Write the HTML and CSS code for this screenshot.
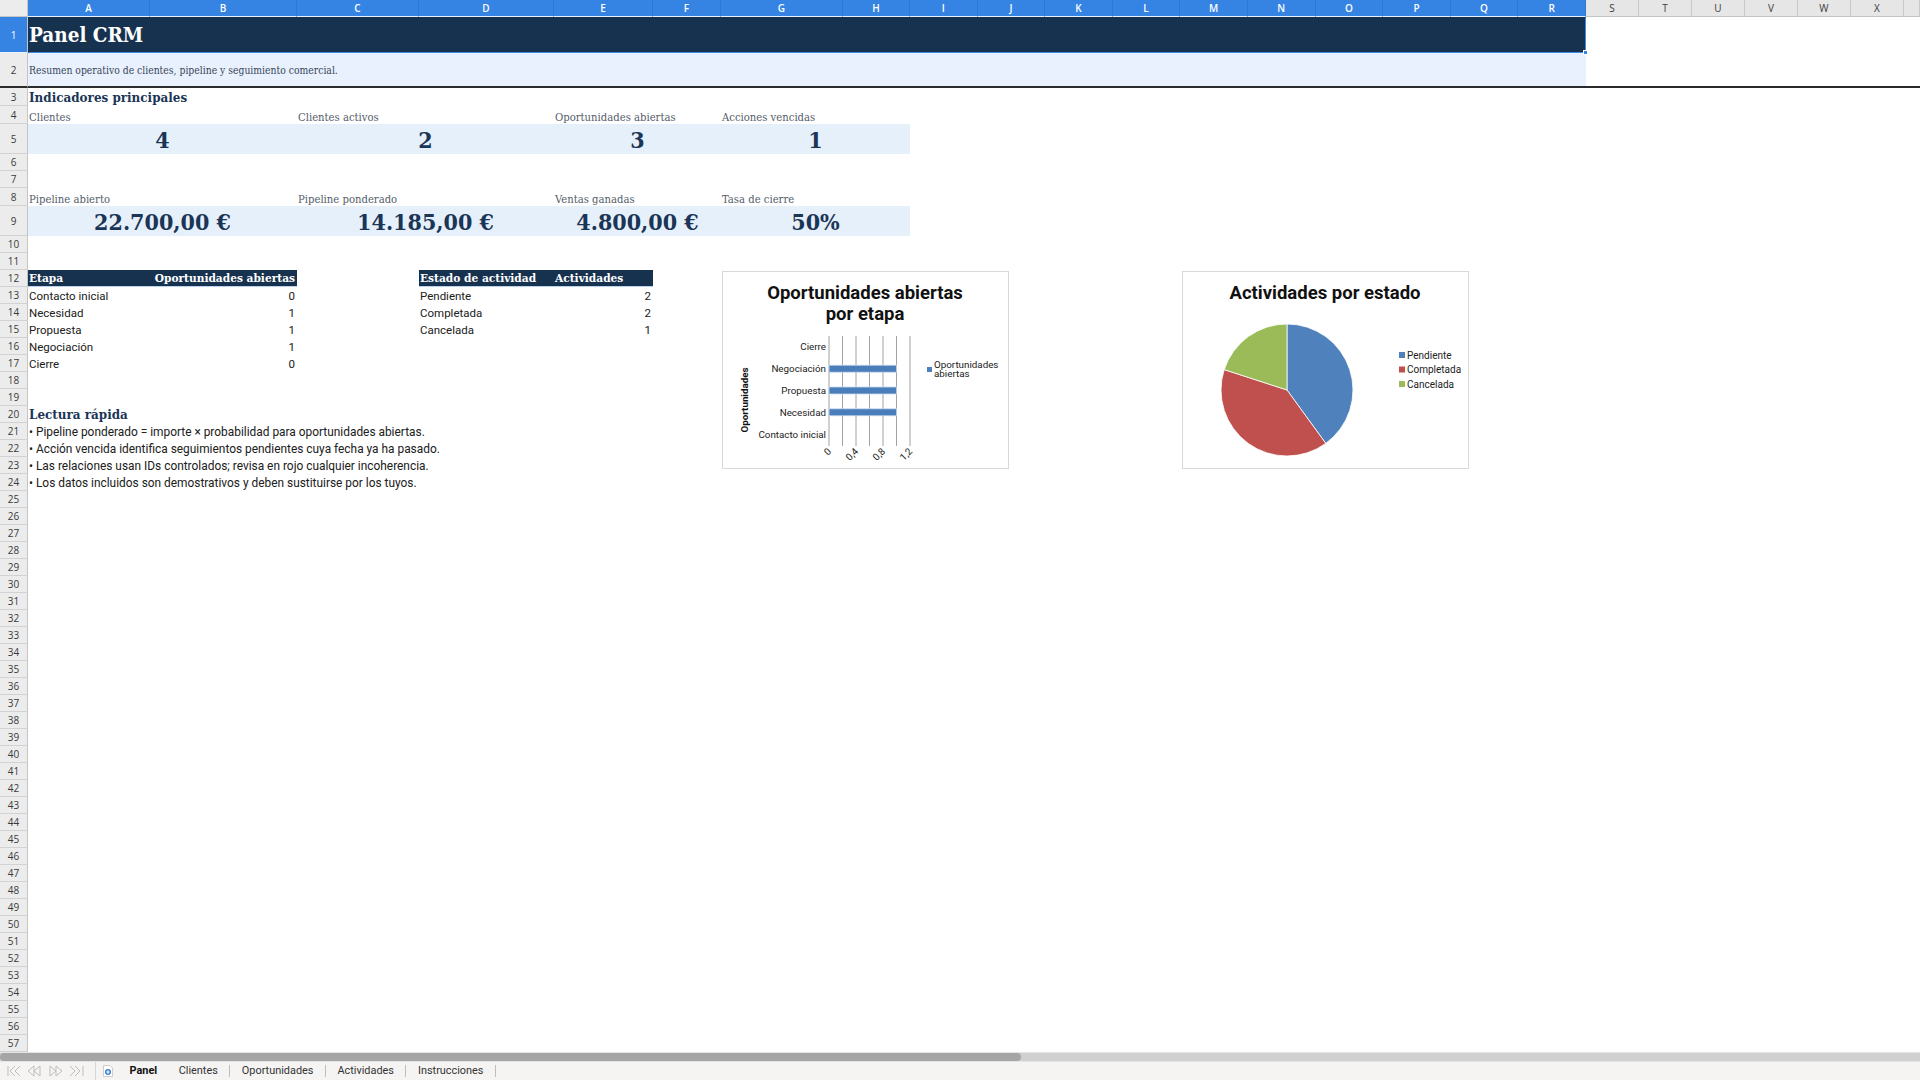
FILE: index.html
```html
<!DOCTYPE html>
<html lang="es">
<head>
<meta charset="utf-8">
<title>Panel CRM</title>
<link rel="stylesheet" href="styles.css">
</head>
<body>
<div class="app">
  <div class="colhdr">
    <div class="corner"></div>
    <div class="ch sel">A</div><div class="ch sel">B</div><div class="ch sel">C</div><div class="ch sel">D</div>
    <div class="ch sel">E</div><div class="ch sel">F</div><div class="ch sel">G</div><div class="ch sel">H</div>
    <div class="ch sel">I</div><div class="ch sel">J</div><div class="ch sel">K</div><div class="ch sel">L</div>
    <div class="ch sel">M</div><div class="ch sel">N</div><div class="ch sel">O</div><div class="ch sel">P</div>
    <div class="ch sel">Q</div><div class="ch sel">R</div>
    <div class="ch">S</div><div class="ch">T</div><div class="ch">U</div><div class="ch">V</div><div class="ch">W</div><div class="ch">X</div><div class="ch"></div>
  </div>

  <div class="sheet">
    <div class="rowhdr rows">
      <div class="rh sel">1</div><div class="rh frz">2</div><div class="rh">3</div><div class="rh">4</div><div class="rh">5</div>
      <div class="rh">6</div><div class="rh">7</div><div class="rh">8</div><div class="rh">9</div><div class="rh">10</div>
      <div class="rh">11</div><div class="rh">12</div><div class="rh">13</div><div class="rh">14</div><div class="rh">15</div>
      <div class="rh">16</div><div class="rh">17</div><div class="rh">18</div><div class="rh">19</div><div class="rh">20</div>
      <div class="rh">21</div><div class="rh">22</div><div class="rh">23</div><div class="rh">24</div><div class="rh">25</div>
      <div class="rh">26</div><div class="rh">27</div><div class="rh">28</div><div class="rh">29</div><div class="rh">30</div>
      <div class="rh">31</div><div class="rh">32</div><div class="rh">33</div><div class="rh">34</div><div class="rh">35</div>
      <div class="rh">36</div><div class="rh">37</div><div class="rh">38</div><div class="rh">39</div><div class="rh">40</div>
      <div class="rh">41</div><div class="rh">42</div><div class="rh">43</div><div class="rh">44</div><div class="rh">45</div>
      <div class="rh">46</div><div class="rh">47</div><div class="rh">48</div><div class="rh">49</div><div class="rh">50</div>
      <div class="rh">51</div><div class="rh">52</div><div class="rh">53</div><div class="rh">54</div><div class="rh">55</div>
      <div class="rh">56</div><div class="rh">57</div>
    </div>

    <div class="cells rows">
      <div class="cell title r1 sAR">Panel CRM<span class="handle"></span></div>
      <div class="cell subtitle r2 sAR">Resumen operativo de clientes, pipeline y seguimiento comercial.</div>
      <div class="freeze r2"></div>

      <div class="cell h3 r3 ca">Indicadores principales</div>

      <div class="cell lbl r4 ca">Clientes</div>
      <div class="cell lbl r4 cc">Clientes activos</div>
      <div class="cell lbl r4 ce">Oportunidades abiertas</div>
      <div class="cell lbl r4 cg">Acciones vencidas</div>

      <div class="cell kpi r5 ca s2">4</div>
      <div class="cell kpi r5 cc s2">2</div>
      <div class="cell kpi r5 ce s2">3</div>
      <div class="cell kpi r5 cg s2">1</div>

      <div class="cell lbl r8 ca">Pipeline abierto</div>
      <div class="cell lbl r8 cc">Pipeline ponderado</div>
      <div class="cell lbl r8 ce">Ventas ganadas</div>
      <div class="cell lbl r8 cg">Tasa de cierre</div>

      <div class="cell kpi r9 ca s2">22.700,00 €</div>
      <div class="cell kpi r9 cc s2">14.185,00 €</div>
      <div class="cell kpi r9 ce s2">4.800,00 €</div>
      <div class="cell kpi r9 cg s2">50%</div>

      <div class="cell th r12 ca">Etapa</div>
      <div class="cell th num r12 cb">Oportunidades abiertas</div>
      <div class="cell td r13 ca">Contacto inicial</div><div class="cell td num r13 cb">0</div>
      <div class="cell td r14 ca">Necesidad</div><div class="cell td num r14 cb">1</div>
      <div class="cell td r15 ca">Propuesta</div><div class="cell td num r15 cb">1</div>
      <div class="cell td r16 ca">Negociación</div><div class="cell td num r16 cb">1</div>
      <div class="cell td r17 ca">Cierre</div><div class="cell td num r17 cb">0</div>

      <div class="cell th r12 cd">Estado de actividad</div>
      <div class="cell th r12 ce">Actividades</div>
      <div class="cell td r13 cd">Pendiente</div><div class="cell td num r13 ce">2</div>
      <div class="cell td r14 cd">Completada</div><div class="cell td num r14 ce">2</div>
      <div class="cell td r15 cd">Cancelada</div><div class="cell td num r15 ce">1</div>

      <div class="cell h3 r20 ca">Lectura rápida</div>
      <div class="cell td bl r21 ca">• Pipeline ponderado = importe × probabilidad para oportunidades abiertas.</div>
      <div class="cell td bl r22 ca">• Acción vencida identifica seguimientos pendientes cuya fecha ya ha pasado.</div>
      <div class="cell td bl r23 ca">• Las relaciones usan IDs controlados; revisa en rojo cualquier incoherencia.</div>
      <div class="cell td bl r24 ca">• Los datos incluidos son demostrativos y deben sustituirse por los tuyos.</div>

      <div class="chart chart-bar">
        <svg width="285" height="196" viewBox="0 0 285 196">
          <text class="ct" x="142" y="27">Oportunidades abiertas</text>
          <text class="ct" x="142" y="48">por etapa</text>
          <g class="grid">
            <line x1="106" y1="64" x2="106" y2="174"/>
            <line x1="119.5" y1="64" x2="119.5" y2="174"/>
            <line x1="133" y1="64" x2="133" y2="174"/>
            <line x1="146.5" y1="64" x2="146.5" y2="174"/>
            <line x1="160" y1="64" x2="160" y2="174"/>
            <line x1="173.5" y1="64" x2="173.5" y2="174"/>
            <line x1="187" y1="64" x2="187" y2="174"/>
          </g>
          <g class="bar">
            <rect x="106" y="93.2" width="67.5" height="7"/>
            <rect x="106" y="115" width="67.5" height="7"/>
            <rect x="106" y="136.8" width="67.5" height="7"/>
          </g>
          <g class="cat">
            <text x="103" y="78.4">Cierre</text>
            <text x="103" y="100.2">Negociación</text>
            <text x="103" y="122">Propuesta</text>
            <text x="103" y="143.8">Necesidad</text>
            <text x="103" y="165.6">Contacto inicial</text>
          </g>
          <g class="xl">
            <text transform="translate(109 180) rotate(-45)">0</text>
            <text transform="translate(136 180) rotate(-45)">0,4</text>
            <text transform="translate(163 180) rotate(-45)">0,8</text>
            <text transform="translate(190 180) rotate(-45)">1,2</text>
          </g>
          <text class="yt" transform="translate(25 128) rotate(-90)">Oportunidades</text>
          <rect class="lg-blue" x="204" y="95" width="5" height="5"/>
          <text class="lg" x="211" y="96">Oportunidades</text>
          <text class="lg" x="211" y="105">abiertas</text>
        </svg>
      </div>

      <div class="chart chart-pie">
        <svg width="285" height="196" viewBox="0 0 285 196">
          <text class="ct" x="142" y="27">Actividades por estado</text>
          <path class="s-blue" d="M104 118 L104 52 A66 66 0 0 1 142.79 171.39 Z"/>
          <path class="s-red" d="M104 118 L142.79 171.39 A66 66 0 0 1 41.23 97.61 Z"/>
          <path class="s-green" d="M104 118 L41.23 97.61 A66 66 0 0 1 104 52 Z"/>
          <rect class="lg-blue" x="216" y="80" width="6" height="6"/>
          <text class="lg2" x="224" y="86.5">Pendiente</text>
          <rect class="lg-red" x="216" y="94.5" width="6" height="6"/>
          <text class="lg2" x="224" y="101">Completada</text>
          <rect class="lg-green" x="216" y="109" width="6" height="6"/>
          <text class="lg2" x="224" y="115.5">Cancelada</text>
        </svg>
      </div>
    </div>
  </div>

  <div class="hscroll"><div class="thumb"></div></div>

  <div class="tabbar">
    <div class="nav">
      <svg width="80" height="14" viewBox="0 0 80 14">
        <g class="navic">
          <path d="M2 2 V12"/><path d="M9 2 L4 7 L9 12"/><path d="M14 2 L9 7 L14 12"/>
          <path d="M28 2 L22 7 L28 12 Z"/><path d="M34 2 L28 7 L34 12 Z"/>
          <path d="M44 2 L50 7 L44 12 Z"/><path d="M50 2 L56 7 L50 12 Z"/>
          <path d="M64 2 L69 7 L64 12"/><path d="M69 2 L74 7 L69 12"/><path d="M77 2 V12"/>
        </g>
      </svg>
    </div>
    <div class="addtab">
      <svg width="12" height="14" viewBox="0 0 12 14">
        <path class="doc" d="M1.5 1.5 H8 L10.5 4 V12.5 H1.5 Z"/>
        <circle cx="6" cy="8" r="3" class="plusc"/>
        <path class="plus" d="M6 6.3 V9.7 M4.3 8 H7.7"/>
      </svg>
    </div>
    <div class="tab active">Panel</div>
    <div class="tab">Clientes</div>
    <div class="tab">Oportunidades</div>
    <div class="tab">Actividades</div>
    <div class="tab">Instrucciones</div>
  </div>
</div>
</body>
</html>
```

FILE: styles.css
```css
* { box-sizing: border-box; }

html, body {
  margin: 0;
  padding: 0;
  width: 1920px;
  height: 1080px;
  overflow: hidden;
  background: #ffffff;
  font-family: Roboto, "Liberation Sans", sans-serif;
}

.app {
  display: flex;
  flex-direction: column;
  width: 1920px;
  height: 1080px;
}

/* column headers */
.colhdr {
  display: grid;
  grid-template-columns: 28px 122px 147px 122px 135px 99px 68px 122px 67px repeat(10, 67.6px) repeat(6, 53px) 1fr;
  height: 17px;
  flex: none;
}
.corner {
  background: #ececec;
  border-right: 1px solid #c4c4c4;
  border-bottom: 1px solid #c4c4c4;
}
.ch {
  display: flex;
  align-items: center;
  justify-content: center;
  background: #e6e6e6;
  color: #3c3c3c;
  font-family: "Open Sans", sans-serif;
  font-size: 10px;
  border-right: 1px solid #c9c9c9;
  border-bottom: 1px solid #c4c4c4;
}
.ch.sel {
  background: #3584e4;
  color: #ffffff;
  font-weight: 600;
  border-right: 1px solid #2f77cf;
  border-bottom: 1px solid #e9f2fd;
}

/* sheet */
.sheet {
  display: flex;
  height: 1035px;
  flex: none;
}
.rows {
  display: grid;
  grid-template-rows: 36px 35px 18px 18px 30px 17px 17px 18px 30px 17px 17px repeat(46, 17px);
}
.rowhdr {
  width: 28px;
  flex: none;
}
.rh {
  display: flex;
  align-items: center;
  justify-content: center;
  background: #ececec;
  color: #3a3a3a;
  font-family: "Open Sans", sans-serif;
  font-size: 10px;
  border-right: 1px solid #c4c4c4;
  border-bottom: 1px solid #d2d2d2;
}
.rh.sel {
  background: #3584e4;
  color: #ffffff;
  border-bottom: 1px solid #e9f2fd;
}
.rh.frz {
  border-bottom: 2px solid #2b2b2b;
}

.cells {
  flex: 1;
  position: relative;
  grid-template-columns: 122px 147px 122px 135px 99px 68px 122px 67px repeat(10, 67.6px) repeat(6, 53px) 1fr;
}

.cell {
  display: flex;
  align-items: center;
  white-space: nowrap;
  padding: 0 2px 0 1px;
  min-width: 0;
}

/* placement */
.r1 { grid-row: 1; } .r2 { grid-row: 2; } .r3 { grid-row: 3; } .r4 { grid-row: 4; }
.r5 { grid-row: 5; } .r8 { grid-row: 8; } .r9 { grid-row: 9; }
.r12 { grid-row: 12; } .r13 { grid-row: 13; } .r14 { grid-row: 14; } .r15 { grid-row: 15; }
.r16 { grid-row: 16; } .r17 { grid-row: 17; }
.r20 { grid-row: 20; } .r21 { grid-row: 21; } .r22 { grid-row: 22; } .r23 { grid-row: 23; } .r24 { grid-row: 24; }
.ca { grid-column-start: 1; } .cb { grid-column-start: 2; } .cc { grid-column-start: 3; }
.cd { grid-column-start: 4; } .ce { grid-column-start: 5; } .cg { grid-column-start: 7; }
.s2 { grid-column-end: span 2; }
.sAR { grid-column: 1 / 19; }

/* row 1 and 2 */
.title {
  position: relative;
  background: #17324f;
  color: #ffffff;
  font-family: "DejaVu Serif Condensed", "DejaVu Serif", serif;
  font-stretch: condensed;
  font-weight: bold;
  font-size: 20.5px;
  border: 1px solid #3d8be3;
  border-top-color: #17324f;
  border-left-color: #17324f;
  padding-left: 0;
}
.handle {
  position: absolute;
  right: -3px;
  bottom: -3px;
  width: 5px;
  height: 5px;
  background: #3584e4;
  border: 1px solid #ffffff;
}
.subtitle {
  background: #e8f1fd;
  color: #38465a;
  font-family: "DejaVu Serif Condensed", "DejaVu Serif", serif;
  font-stretch: condensed;
  font-size: 10.3px;
  padding-bottom: 1px;
}
.freeze {
  grid-column: 1 / -1;
  align-self: end;
  height: 2px;
  background: #2b2b2b;
}

.h3 {
  color: #1b3556;
  font-family: "DejaVu Serif Condensed", "DejaVu Serif", serif;
  font-stretch: condensed;
  font-weight: bold;
  font-size: 13.3px;
}
.lbl {
  color: #545d69;
  font-family: "DejaVu Serif Condensed", "DejaVu Serif", serif;
  font-stretch: condensed;
  font-size: 11.2px;
  align-items: flex-end;
  padding-bottom: 0;
}
.kpi {
  justify-content: center;
  background: #e6f0fb;
  color: #1b3556;
  font-family: "DejaVu Serif Condensed", "DejaVu Serif", serif;
  font-stretch: condensed;
  font-weight: bold;
  font-size: 23px;
  padding: 0;
}

.th {
  background: #17324f;
  color: #ffffff;
  font-family: "DejaVu Serif Condensed", "DejaVu Serif", serif;
  font-stretch: condensed;
  font-weight: bold;
  font-size: 11.8px;
  border-bottom: 1px solid #b9d3ef;
}
.td {
  color: #202020;
  font-size: 11.5px;
}
.td.bl { font-size: 11.9px; }
.num { justify-content: flex-end; }

/* charts (floating objects over the sheet) */
.chart {
  position: absolute;
  top: 254px;
  width: 287px;
  height: 198px;
  border: 1px solid #d9d9d9;
  background: #ffffff;
}
.chart svg { display: block; }
.chart-bar { left: 694px; }
.chart-pie { left: 1154px; }

.ct {
  font-family: Roboto, sans-serif;
  font-weight: bold;
  font-size: 18.5px;
  fill: #111111;
  text-anchor: middle;
}
.grid line { stroke: #8c8c8c; stroke-width: 0.8; }
.bar rect { fill: #4a7ebb; stroke: #c9d9ee; stroke-width: 0.8; }
.cat text {
  font-family: Roboto, sans-serif;
  font-size: 9.8px;
  fill: #222222;
  text-anchor: end;
}
.xl text {
  font-family: Roboto, sans-serif;
  font-size: 9.8px;
  fill: #222222;
  text-anchor: end;
}
.yt {
  font-family: Roboto, sans-serif;
  font-weight: bold;
  font-size: 9.8px;
  fill: #111111;
  text-anchor: middle;
}
.lg {
  font-family: Roboto, sans-serif;
  font-size: 9.8px;
  fill: #222222;
}
.lg2 {
  font-family: Roboto, sans-serif;
  font-size: 10px;
  fill: #222222;
}
.lg-blue { fill: #4f81bd; }
.lg-red { fill: #c0504d; }
.lg-green { fill: #9bbb59; }
.s-blue { fill: #4f81bd; stroke: #ffffff; stroke-width: 0.8; }
.s-red { fill: #c0504d; stroke: #ffffff; stroke-width: 0.8; }
.s-green { fill: #9bbb59; stroke: #ffffff; stroke-width: 0.8; }

/* horizontal scrollbar */
.hscroll {
  height: 10px;
  flex: none;
  background: #d0d0d0;
  border-top: 1px solid #e4e4e4;
  border-bottom: 1px solid #e4e4e4;
}
.thumb {
  width: 1021px;
  height: 100%;
  background: #a5a5a5;
  border-radius: 4px;
}

/* sheet tabs */
.tabbar {
  flex: 1;
  display: flex;
  align-items: center;
  background: #f5f4f3;
  font-family: Roboto, sans-serif;
  font-size: 10.9px;
  color: #333333;
}
.nav {
  display: flex;
  align-items: center;
  padding-left: 6px;
  width: 96px;
  height: 100%;
  border-right: 1px solid #d6d6d6;
}
.navic path { fill: none; stroke: #bdbdbd; stroke-width: 1; }
.addtab {
  display: flex;
  align-items: center;
  padding-left: 6px;
  width: 22px;
}
.doc { fill: #ffffff; stroke: #c2c2c2; stroke-width: 0.8; }
.plusc { fill: #3a7fd0; }
.plus { stroke: #ffffff; stroke-width: 1.1; }
.tab {
  padding: 0 11.5px;
  line-height: 12px;
  border-right: 1px solid #bdbdbd;
}
.tab.active {
  font-weight: bold;
  color: #111111;
  border-right: none;
  padding-right: 10px;
}
```
